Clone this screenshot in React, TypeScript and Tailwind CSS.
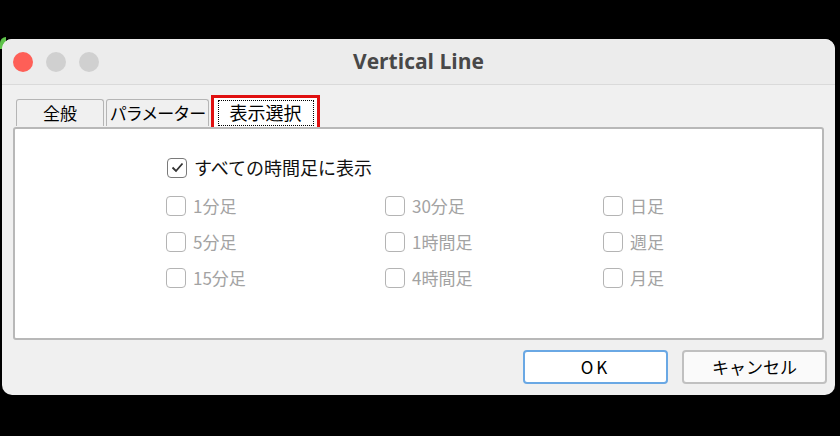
const jp = { fontFamily: '"Noto Sans CJK JP", "Noto Sans", sans-serif' };

const options = [
  ['1分足', '30分足', '日足'],
  ['5分足', '1時間足', '週足'],
  ['15分足', '4時間足', '月足'],
];

function Box({ checked, disabled }: { checked?: boolean; disabled?: boolean }) {
  return (
    <span
      className={`flex h-[20px] w-[20px] shrink-0 items-center justify-center rounded-[4px] border-[1.5px] ${
        disabled ? 'border-[#b4b4b4] bg-white' : 'border-[#7a7a7a] bg-white'
      }`}
    >
      {checked && (
        <svg width="13" height="11" viewBox="0 0 13 11" fill="none">
          <path d="M1.5 5.5 L5 9 L11.5 1.5" stroke="#333" strokeWidth="1.8" />
        </svg>
      )}
    </span>
  );
}

export default function App() {
  return (
    <div className="relative h-[436px] w-[840px] overflow-hidden bg-black pl-[2px] pt-[39px]" style={jp}>
      <div className="absolute left-0 top-[37px] h-[12px] w-[6px] rounded-tl-[6px] bg-[#5ec24a]" />
      <div className="relative flex h-[356px] w-[833px] flex-col overflow-hidden rounded-[10px] bg-[#f0f0f0]">
        {/* Title bar */}
        <div className="relative flex h-[46px] shrink-0 items-center border-b border-[#dadada] bg-[#ececec]">
          <div className="flex gap-[13px] pl-[11px]">
            <span className="h-[20px] w-[20px] rounded-full bg-[#fe5f57]" />
            <span className="h-[20px] w-[20px] rounded-full bg-[#d0d0d0]" />
            <span className="h-[20px] w-[20px] rounded-full bg-[#d0d0d0]" />
          </div>
          <div
            className="absolute inset-0 flex items-center justify-center text-[21px] font-bold text-[#484848]"
            style={{ fontFamily: '"Open Sans", "Liberation Sans", sans-serif' }}
          >
            Vertical Line
          </div>
        </div>

        {/* Tabs */}
        <div className="flex h-[42px] items-end pl-[14px]">
          <div className="mb-[1px] flex h-[27px] w-[88px] items-center justify-center rounded-t-[3px] border border-b-0 border-[#b5b5b5] bg-[#f0f0f0] text-[17px] text-black">
            全般
          </div>
          <div className="mb-[1px] ml-[2px] flex h-[27px] w-[103px] items-center justify-center rounded-t-[3px] border border-b-0 border-[#b5b5b5] bg-[#f0f0f0] text-[17px] tracking-[-1px] text-black">
            パラメーター
          </div>
          <div className="-mb-[3px] ml-[2px] flex h-[35px] w-[109px] items-center justify-center border-[3px] border-[#e01010] bg-white">
            <span className="flex h-[26px] w-[96px] items-center justify-center border border-dotted border-black text-[18px] text-black">
              表示選択
            </span>
          </div>
        </div>

        {/* Panel */}
        <div className="mx-[11px] h-[213px] rounded-[3px] border-2 border-[#b8b8b8] bg-white pl-[152px] pt-[25px]">
          <div className="flex items-center gap-[7px] text-[18px] text-[#111]">
            <Box checked />
            すべての時間足に表示
          </div>
          <div className="ml-[-1px] mt-[15px] flex flex-col gap-[16px]">
            {options.map((row, i) => (
              <div key={i} className="grid grid-cols-[219px_218px_120px] items-center">
                {row.map((t) => (
                  <div key={t} className="flex items-center gap-[7px] text-[17px] leading-[20px] text-[#a3a3a3]">
                    <Box disabled />
                    {t}
                  </div>
                ))}
              </div>
            ))}
          </div>
        </div>

        {/* Buttons */}
        <div className="mt-[10px] flex justify-end gap-[14px] pr-[8px]">
          <button className="flex h-[34px] w-[145px] items-center justify-center rounded-[4px] border-2 border-[#6aa8e4] bg-white text-[17px] tracking-[3px] text-black">
            OK
          </button>
          <button className="flex h-[34px] w-[145px] items-center justify-center rounded-[4px] border-2 border-[#c0c0c0] bg-[#fafafa] text-[17px] text-black">
            キャンセル
          </button>
        </div>
      </div>
    </div>
  );
}
